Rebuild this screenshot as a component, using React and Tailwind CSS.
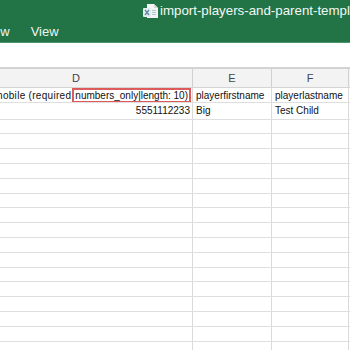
import React from "react";

const sans = { fontFamily: '"Liberation Sans", Arial, sans-serif' };

// Excel file icon in the title bar
const XlsIcon = () => (
  <svg width="16" height="16" viewBox="0 0 16 16" className="shrink-0">
    <path d="M4 1h7l4 4v10H4z" fill="#f4f4f4" />
    <path d="M11 1v4h4" fill="#d6d6d6" />
    <rect x="9" y="7" width="4" height="1" fill="#a9c9d6" />
    <rect x="9" y="9" width="4" height="1" fill="#a9c9d6" />
    <rect x="9" y="11" width="4" height="1" fill="#a9c9d6" />
    <rect x="0" y="5" width="8" height="9" rx="1" fill="#e4ecef" />
    <path d="M2 7l4 5M6 7l-4 5" stroke="#5d8a9c" strokeWidth="1.3" />
  </svg>
);

const emptyRows = Array.from({ length: 16 }, (_, i) => i);

const Row = ({ h, d, e, f }) => (
  <div className={`flex border-b border-[#dedede] ${h}`}>
    <div className="w-[193px] shrink-0 border-r border-[#dadada] flex items-center justify-end overflow-hidden whitespace-nowrap pr-[1px]">
      {d}
    </div>
    <div className="w-[79px] shrink-0 border-r border-[#dadada] flex items-center overflow-hidden whitespace-nowrap pl-[3px]">
      {e}
    </div>
    <div className="w-[77px] shrink-0 border-r border-[#dadada] flex items-center overflow-hidden whitespace-nowrap pl-[3px]">
      {f}
    </div>
  </div>
);

export default function App() {
  return (
    <div className="w-[350px] h-[350px] overflow-hidden bg-white" style={sans}>
      {/* title bar + ribbon tabs */}
      <div className="bg-[#227447] h-[43px] border-b border-[#4e9670] text-white">
        <div className="h-[21px] flex items-center pl-[143px] pt-[1px] whitespace-nowrap overflow-hidden">
          <XlsIcon />
          <span className="ml-[1px] text-[13.3px] leading-none text-[#f3f8f5]">
            import-players-and-parent-template.xlsx
          </span>
        </div>
        <div className="h-[21px] flex items-center whitespace-nowrap text-[13px] leading-none text-[#eef6f1]">
          <span className="ml-[-33px]">Review</span>
          <span className="ml-[21px]">View</span>
        </div>
      </div>

      {/* formula bar area */}
      <div className="h-[24px] bg-white" />
      <div className="h-[2px] bg-[#d3d3d3]" />

      {/* sheet */}
      <div className="text-[10px] text-[#111]">
        <div className="flex h-[19px] bg-[#f3f3f3] border-b border-[#d4d4d4] text-[#454545] text-[11px]">
          <div className="w-[193px] shrink-0 border-r border-[#d0d0d0] flex items-center justify-end pr-[112px]">D</div>
          <div className="w-[79px] shrink-0 border-r border-[#d0d0d0] flex items-center justify-center">E</div>
          <div className="w-[77px] shrink-0 border-r border-[#d0d0d0] flex items-center justify-center">F</div>
        </div>

        <Row
          h="h-[15px]"
          d={
            <>
              <span className="tracking-[0.3px] mr-[1px]">parentmobile (required</span>
              <span className="border-2 border-[#dd5b5b] px-[1px] h-[15px] flex items-center">
                numbers_only|length: 10)
              </span>
            </>
          }
          e="playerfirstname"
          f="playerlastname"
        />
        <Row h="h-[16.6px]" d={<span className="pr-[1px]">5551112233</span>} e="Big" f="Test Child" />
        {emptyRows.map((i) => (
          <Row key={i} h="h-[14.8px]" />
        ))}
      </div>
    </div>
  );
}
